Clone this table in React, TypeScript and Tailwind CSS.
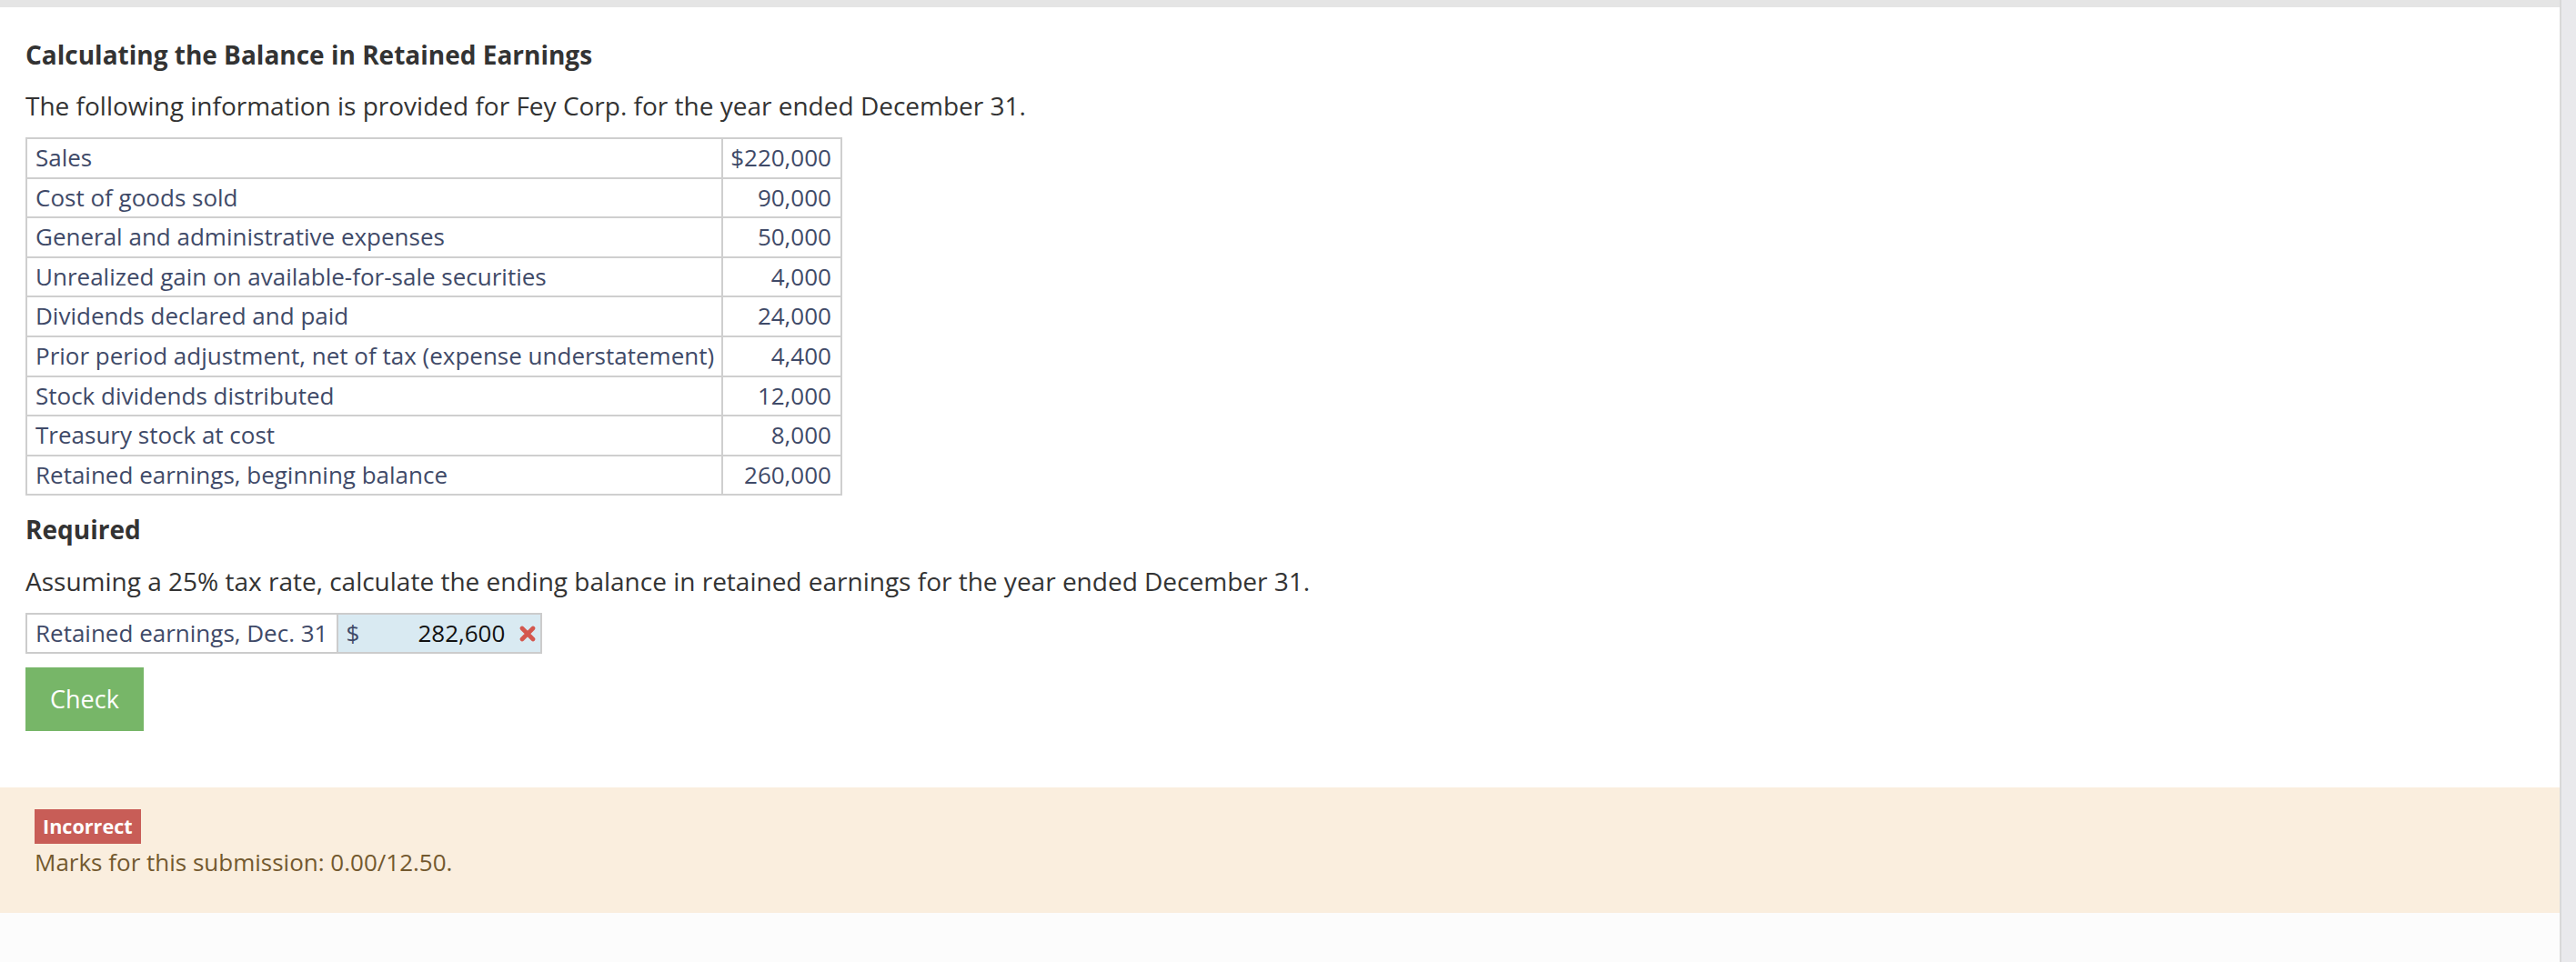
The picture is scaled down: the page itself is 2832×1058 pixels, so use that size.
import React from "react";

const rows: [string, string][] = [
  ["Sales", "$220,000"],
  ["Cost of goods sold", "90,000"],
  ["General and administrative expenses", "50,000"],
  ["Unrealized gain on available-for-sale securities", "4,000"],
  ["Dividends declared and paid", "24,000"],
  ["Prior period adjustment, net of tax (expense understatement)", "4,400"],
  ["Stock dividends distributed", "12,000"],
  ["Treasury stock at cost", "8,000"],
  ["Retained earnings, beginning balance", "260,000"],
];

function WrongMark() {
  return (
    <svg width="18" height="18" viewBox="0 0 18 18" className="shrink-0">
      <path d="M3 3 L15 15 M15 3 L3 15" stroke="#d4574e" strokeWidth="4.6" strokeLinecap="round" />
    </svg>
  );
}

export default function App() {
  return (
    <div className="flex h-[1058px] w-full font-['Open_Sans',sans-serif] overflow-hidden">
      {/* main column */}
      <div className="flex flex-1 flex-col bg-white">
        <div className="h-[8px] bg-[#e5e5e5]" />

        <div className="px-[28px] pt-[32px] text-[#333]">
          <h2 className="text-[28px] font-bold leading-[40px]">
            Calculating the Balance in Retained Earnings
          </h2>
          <p className="mt-[16px] text-[28px] leading-[40px]">
            The following information is provided for Fey Corp. for the year ended December 31.
          </p>

          {/* data table */}
          <table className="mt-[15px] border-collapse border-2 border-[#cfcfcf] text-[26px] leading-[41.6px] text-[#3f4a68]">
            <tbody>
              {rows.map(([label, value]) => (
                <tr key={label}>
                  <td className="border-2 border-[#cfcfcf] pl-[9px] pr-[8px] whitespace-nowrap">{label}</td>
                  <td className="border-2 border-[#cfcfcf] pl-[8px] pr-[10px] text-right whitespace-nowrap">{value}</td>
                </tr>
              ))}
            </tbody>
          </table>

          <h3 className="mt-[17px] text-[28px] font-bold leading-[40px]">Required</h3>
          <p className="mt-[17px] text-[28px] leading-[40px]">
            Assuming a 25% tax rate, calculate the ending balance in retained earnings for the year ended December 31.
          </p>

          {/* answer row */}
          <div className="mt-[15px] inline-flex border-2 border-[#cccccc] text-[26px] leading-[41px]">
            <div className="pl-[9px] pr-[10px] text-[#3f4a68] whitespace-nowrap border-r-2 border-[#cccccc]">
              Retained earnings, Dec. 31
            </div>
            <div className="flex items-center bg-[#d9eaf2] pl-[8px] pr-[5px]">
              <span className="text-[#3f4a68]">$</span>
              <span className="w-[160px] text-right text-[#111]">282,600</span>
              <span className="ml-[16px] flex items-center">
                <WrongMark />
              </span>
            </div>
          </div>

          <div>
            <button className="mt-[15px] h-[70px] bg-[#77b668] px-[27px] text-[27px] leading-[70px] text-white">
              Check
            </button>
          </div>
        </div>

        {/* feedback band */}
        <div className="mt-[62px] bg-[#faeede] px-[38px] pt-[24px] pb-[36px]">
          <span className="inline-block bg-[#c85d57] px-[9px] text-[21.6px] font-bold leading-[38px] text-white">
            Incorrect
          </span>
          <div className="text-[26px] leading-[40px] text-[#73592f]">Marks for this submission: 0.00/12.50.</div>
        </div>

        <div className="flex-1 bg-[#fcfcfc]" />
      </div>

      {/* right strip */}
      <div className="w-[18px] shrink-0 border-l-2 border-[#d9d9d9] bg-[#e9e9ec]" />
    </div>
  );
}
